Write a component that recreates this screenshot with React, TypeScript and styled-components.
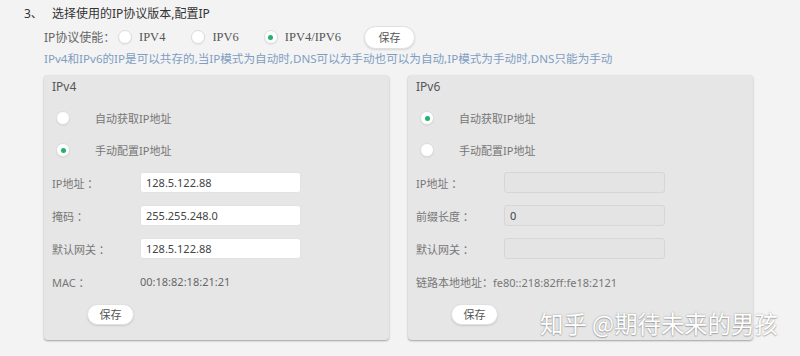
import React from 'react';
import styled, { createGlobalStyle } from 'styled-components';

const GlobalStyle = createGlobalStyle`
  html, body {
    margin: 0;
    padding: 0;
    background: #f3f3f3;
  }
  body {
    font-family: "Noto Sans", "Noto Sans CJK SC", sans-serif;
  }
`;

const Page = styled.div`
  position: relative;
  width: 800px;
  height: 356px;
  background: #f3f3f3;
  overflow: hidden;
`;

const TitleRow = styled.div`
  display: flex;
  align-items: center;
  height: 26px;
  padding-left: 24px;
  font-size: 12px;
  color: #333;
`;

const StepNo = styled.span`
  width: 28px;
`;

const Section = styled.div`
  padding-left: 44px;
`;

const ProtocolRow = styled.div`
  display: flex;
  align-items: center;
  height: 22px;
  font-size: 12px;
  color: #666;
`;

const ProtoLabel = styled.span`
  width: 74px;
`;

const ProtoOption = styled.label<{ $gap: number }>`
  display: flex;
  align-items: center;
  gap: 7px;
  margin-right: ${(p) => p.$gap}px;
  font-family: "Liberation Serif", "Noto Sans CJK SC", serif;
  font-size: 12.5px;
  color: #555;
`;

const Radio = styled.span<{ $checked?: boolean }>`
  position: relative;
  flex: none;
  width: 14px;
  height: 14px;
  border-radius: 50%;
  background: #fff;
  border: 1px solid #dcdcdc;
  box-sizing: border-box;
  box-shadow: 0 1px 1px rgba(0, 0, 0, 0.06);

  &::after {
    content: '';
    display: ${(p) => (p.$checked ? 'block' : 'none')};
    position: absolute;
    left: 50%;
    top: 50%;
    width: 5px;
    height: 5px;
    margin: -2.5px 0 0 -2.5px;
    border-radius: 50%;
    background: #22b26a;
  }
`;

const PillButton = styled.button<{ $w: number; $h: number }>`
  width: ${(p) => p.$w}px;
  height: ${(p) => p.$h}px;
  padding: 0;
  border: 1px solid #e0e0e0;
  border-radius: 12px;
  background: #fff;
  box-shadow: 0 1px 2px rgba(0, 0, 0, 0.12);
  font-family: "Noto Sans CJK SC", sans-serif;
  font-size: 11px;
  color: #555;
`;

const Hint = styled.div`
  height: 22px;
  line-height: 22px;
  font-size: 11.6px;
  color: #7f9dc2;
  white-space: nowrap;
`;

const Panels = styled.div`
  display: flex;
  gap: 19px;
  margin-top: 5px;
`;

const Panel = styled.div`
  width: 345px;
  height: 265px;
  box-sizing: border-box;
  padding-left: 8px;
  background: #e6e6e6;
  border-radius: 4px;
  box-shadow: 0 1px 2px rgba(0, 0, 0, 0.35);
`;

const PanelTitle = styled.div`
  height: 24px;
  line-height: 24px;
  font-size: 12px;
  color: #555;
`;

const ModeList = styled.div`
  margin-top: 3px;
`;

const ModeRow = styled.div`
  display: flex;
  align-items: center;
  height: 32px;
  padding-left: 4px;
  gap: 25px;
  font-size: 11px;
  color: #777;
`;

const FieldRow = styled.div`
  display: flex;
  align-items: center;
  height: 33px;
  font-size: 11px;
  color: #777;
`;

const FieldLabel = styled.span`
  width: 88px;
`;

const Field = styled.div<{ $disabled?: boolean }>`
  width: 161px;
  height: 21px;
  box-sizing: border-box;
  padding-left: 5px;
  line-height: 19px;
  border: 1px solid ${(p) => (p.$disabled ? '#d6d6d6' : '#e2e2e2')};
  border-radius: 3px;
  background: ${(p) => (p.$disabled ? '#e4e4e4' : '#fff')};
  font-size: 11px;
  color: #444;
`;

const Plain = styled.span`
  color: #666;
`;

const ButtonRow = styled.div`
  margin-top: 4px;
  padding-left: 35px;
`;

const Watermark = styled.div`
  position: absolute;
  left: 540px;
  top: 306px;
  font-family: "Noto Sans CJK SC", sans-serif;
  font-size: 23.4px;
  color: #fff;
  text-shadow: 0 0 2px rgba(0, 0, 0, 0.35), 0 1px 1px rgba(0, 0, 0, 0.2);
  white-space: nowrap;
`;

interface FieldDef {
  label: string;
  value: string;
}

const Ipv4Fields: FieldDef[] = [
  { label: 'IP地址 ：', value: '128.5.122.88' },
  { label: '掩码 ：', value: '255.255.248.0' },
  { label: '默认网关 ：', value: '128.5.122.88' },
];

const Ipv6Fields: FieldDef[] = [
  { label: 'IP地址 ：', value: '' },
  { label: '前缀长度 ：', value: '0' },
  { label: '默认网关 ：', value: '' },
];

const ConfigPanel: React.FC<{
  title: string;
  auto: boolean;
  fields: FieldDef[];
  disabled?: boolean;
  footer: React.ReactNode;
}> = ({ title, auto, fields, disabled, footer }) => (
  <Panel>
    <PanelTitle>{title}</PanelTitle>
    <ModeList>
      <ModeRow>
        <Radio $checked={auto} />
        自动获取IP地址
      </ModeRow>
      <ModeRow>
        <Radio $checked={!auto} />
        手动配置IP地址
      </ModeRow>
    </ModeList>
    {fields.map((f) => (
      <FieldRow key={f.label}>
        <FieldLabel>{f.label}</FieldLabel>
        <Field $disabled={disabled}>{f.value}</Field>
      </FieldRow>
    ))}
    <FieldRow>{footer}</FieldRow>
    <ButtonRow>
      <PillButton $w={47} $h={21}>保存</PillButton>
    </ButtonRow>
  </Panel>
);

const App: React.FC = () => {
  return (
    <Page>
      <GlobalStyle />
      <TitleRow>
        <StepNo>3、</StepNo>
        选择使用的IP协议版本,配置IP
      </TitleRow>
      <Section>
        <ProtocolRow>
          <ProtoLabel>IP协议使能：</ProtoLabel>
          <ProtoOption $gap={26}>
            <Radio />
            IPV4
          </ProtoOption>
          <ProtoOption $gap={25}>
            <Radio />
            IPV6
          </ProtoOption>
          <ProtoOption $gap={23}>
            <Radio $checked />
            IPV4/IPV6
          </ProtoOption>
          <PillButton $w={51} $h={23}>保存</PillButton>
        </ProtocolRow>
        <Hint>
          IPv4和IPv6的IP是可以共存的,当IP模式为自动时,DNS可以为手动也可以为自动,IP模式为手动时,DNS只能为手动
        </Hint>
        <Panels>
          <ConfigPanel
            title="IPv4"
            auto={false}
            fields={Ipv4Fields}
            footer={
              <>
                <FieldLabel>MAC ：</FieldLabel>
                <Plain>00:18:82:18:21:21</Plain>
              </>
            }
          />
          <ConfigPanel
            title="IPv6"
            auto
            disabled
            fields={Ipv6Fields}
            footer={<span>链路本地地址：fe80::218:82ff:fe18:2121</span>}
          />
        </Panels>
      </Section>
      <Watermark>知乎 @期待未来的男孩</Watermark>
    </Page>
  );
};

export default App;
